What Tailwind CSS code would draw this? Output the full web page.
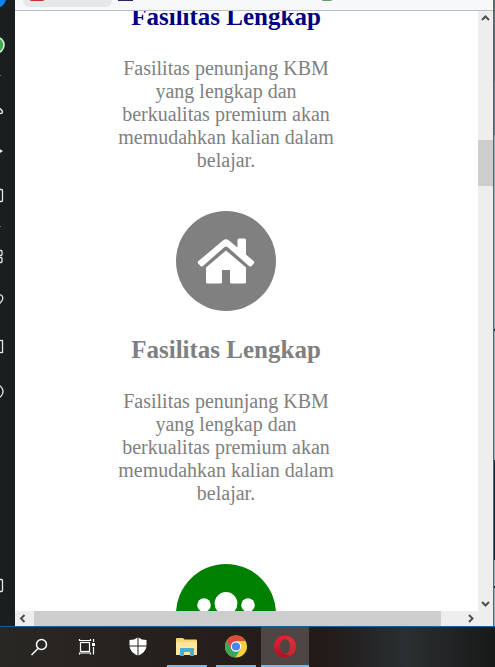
<!DOCTYPE html>
<html lang="id">
<head>
<meta charset="utf-8">
<meta name="viewport" content="width=device-width, initial-scale=1">
<title>Fasilitas Lengkap</title>
<script src="https://cdn.jsdelivr.net/npm/@tailwindcss/browser@4"></script>
</head>
<body class="flex h-screen flex-col overflow-hidden bg-white font-['Liberation_Serif','Times_New_Roman',serif]">
<div class="flex min-h-0 flex-1 border-b border-[#1b5f95]">

  <nav aria-label="Sidebar" class="flex w-[15px] shrink-0 flex-col overflow-hidden bg-[#191e1f]">
    <button aria-label="Messenger" class="h-5 shrink-0"><svg class="block" width="15" height="20"><circle cx="-4" cy="-2" r="10" fill="#0a84f5"/></svg></button>
    <button aria-label="WhatsApp" class="mt-[5px] h-10 shrink-0"><svg class="block" width="15" height="40"><circle cx="-4" cy="20" r="8" fill="#43a850" stroke="#e6f2e6" stroke-width="1.5"/></svg></button>
    <div class="h-[26px] shrink-0"><svg class="block" width="15" height="26"><path d="M0 10.5h1" stroke="#777"/></svg></div>
    <button aria-label="Player" class="h-10 shrink-0"><svg class="block" width="15" height="40" fill="none" stroke="#e8e8e8" stroke-width="1.5"><path d="M-1 17l2 1.500c2 2 2 4-.500 4h-2"/></svg></button>
    <button aria-label="Kirim" class="h-10 shrink-0"><svg class="block" width="15" height="40"><path d="M-1 17.500l4 2.500-4 2.500z" fill="#eee"/></svg></button>
    <button aria-label="Ruang kerja" class="mt-1 h-10 shrink-0"><svg class="block" width="15" height="40"><rect x="-9" y="14.500" width="11.500" height="12" rx="1" fill="none" stroke="#e8e8e8" stroke-width="1.300"/></svg></button>
    <div class="h-[22px] shrink-0"><svg class="block" width="15" height="22"><path d="M0 11.500h1" stroke="#777"/></svg></div>
    <button aria-label="Panggilan cepat" class="h-10 shrink-0"><svg class="block" width="15" height="40" fill="none" stroke="#e8e8e8" stroke-width="1.300"><rect x="-3" y="13.500" width="5" height="5" rx="1"/><rect x="-3" y="20.500" width="5" height="5" rx="1"/></svg></button>
    <button aria-label="Favorit" class="mt-[3px] h-10 shrink-0"><svg class="block" width="15" height="40" fill="none" stroke="#e8e8e8" stroke-width="1.300"><path d="M-1 15c4-1 5 4 2 7l-3 3"/></svg></button>
    <button aria-label="Berita" class="mt-[6px] h-10 shrink-0"><svg class="block" width="15" height="40"><rect x="-9" y="14.500" width="11.500" height="12" fill="none" stroke="#e8e8e8" stroke-width="1.300"/></svg></button>
    <button aria-label="Riwayat" class="mt-[5px] h-10 shrink-0"><svg class="block" width="15" height="40"><circle cx="-3.500" cy="20.500" r="6.500" fill="none" stroke="#e8e8e8" stroke-width="1.300"/></svg></button>
    <button aria-label="Pengaturan" class="mt-auto mb-[21px] h-10 shrink-0"><svg class="block" width="15" height="40"><rect x="-9" y="14.500" width="11.500" height="12" rx="1" fill="none" stroke="#e8e8e8" stroke-width="1.300"/></svg></button>
  </nav>

  <div class="flex min-w-0 flex-1 flex-col">
    <header class="flex h-[11px] shrink-0 items-start border-b border-[#b9bdc4] bg-[#f6f8fa] pl-2">
      <svg class="h-[7px] w-[89px] rounded-b-md bg-[#e6e7e9]"><rect x="6" y="-6" width="16" height="7" rx="3" fill="#c8312b"/></svg>
      <svg class="ml-[6px] h-[7px] w-4"><path d="M0 0h15v1H0z" fill="#1d2a63"/></svg>
      <svg class="ml-[188px] h-[7px] w-4"><rect x="-1" y="-6" width="12" height="7" rx="3" fill="#66a067"/></svg>
    </header>

    <div class="flex min-h-0 flex-1">
      <div class="flex min-w-0 flex-1 flex-col">
        <main class="min-h-0 flex-1 overflow-hidden bg-white pl-[101px] text-center text-[20px] leading-[23px] text-[#808080]">
          <section class="-mt-2 w-[220px]">
            <h2 class="text-[25px] leading-7 font-bold whitespace-nowrap text-[#000080]">Fasilitas Lengkap</h2>
            <p class="mt-[26px]">Fasilitas penunjang KBM yang lengkap dan berkualitas premium akan memudahkan kalian dalam belajar.</p>
          </section>
          <section class="mt-[39px] w-[220px]">
            <svg class="mx-auto block" width="100" height="100" viewBox="0 0 100 100" role="img" aria-label="Rumah">
              <circle cx="50" cy="50" r="50" fill="#808080"/>
              <path fill="#fff" d="M47 29.500q3-2.500 6 0l8.500 7V29q0-1.500 1.500-1.500h5.500q1.500 0 1.500 1.500v14.500l7.500 6.500q1.500 1 .300 2.500l-2 2.300q-1.300 1.500-2.800.200L51.500 36q-1.500-1.200-3 0L27 55q-1.500 1.300-2.800-.200l-2-2.300q-1.200-1.500.300-2.500z"/>
              <path fill="#fff" d="M50 39.500l20 17V71q0 1.500-1.500 1.500H55.500q-1.500 0-1.500-1.500V59h-8v12q0 1.500-1.500 1.500h-13Q30 72.500 30 71V56.500z"/>
            </svg>
            <h2 class="mt-[25px] text-[25px] leading-7 font-bold whitespace-nowrap">Fasilitas Lengkap</h2>
            <p class="mt-[26px]">Fasilitas penunjang KBM yang lengkap dan berkualitas premium akan memudahkan kalian dalam belajar.</p>
          </section>
          <section class="mt-[59px] w-[220px]">
            <svg class="mx-auto block" width="100" height="100" viewBox="0 0 100 100" role="img" aria-label="Pengguna">
              <circle cx="50" cy="50" r="50" fill="#008000"/>
              <g fill="#fff"><circle cx="28" cy="41" r="6.800"/><circle cx="50" cy="39.500" r="11.400"/><circle cx="72" cy="41" r="6.800"/></g>
            </svg>
          </section>
        </main>
        <div class="flex h-[15px] shrink-0 bg-[#eeeeee]">
          <button aria-label="Gulir kiri" class="w-[19px]"><svg class="block" width="19" height="15" fill="none" stroke="#505050" stroke-width="2"><path d="M9.500 4L6 7.500 9.500 11"/></svg></button>
          <div class="flex-1 bg-[#cdcdcd]"></div>
          <button aria-label="Gulir kanan" class="w-[37px]"><svg class="block" width="37" height="15" fill="none" stroke="#505050" stroke-width="2"><path d="M28 4l3.500 3.500L28 11"/></svg></button>
        </div>
      </div>
      <div class="flex w-[15px] shrink-0 flex-col bg-[#eeeeee]">
        <button aria-label="Gulir atas" class="h-[15px]"><svg class="block" width="15" height="15" fill="none" stroke="#505050" stroke-width="2"><path d="M4 9l3.500-3.500L11 9"/></svg></button>
        <div class="mt-[114px] h-[46px] bg-[#cdcdcd]"></div>
        <button aria-label="Gulir bawah" class="mt-auto mb-[15px] h-[15px]"><svg class="block" width="15" height="15" fill="none" stroke="#505050" stroke-width="2"><path d="M4 6l3.500 3.500L11 6"/></svg></button>
      </div>
    </div>
  </div>
  <div class="w-[2px] shrink-0 border-l border-[#2472ab] bg-[#8fb3cc]">
    <div class="h-[82px] bg-[#557076]"></div>
    <div class="h-[53px] bg-[#62789a]"></div>
    <div class="mt-[194px] h-[2px] bg-[#10202c]"></div>
    <div class="mt-[129px] h-[100px] bg-[#09263e]"></div>
    <div class="mt-[26px] h-[2px] bg-[#10202c]"></div>
  </div>
</div>

<footer class="flex h-10 shrink-0 bg-linear-to-r from-[#292724] via-[#241b18] via-60% to-[#171818]">
  <div class="flex flex-1 bg-linear-to-r from-transparent from-65% via-[#2a2f31] via-82% to-transparent pl-[15px]">
    <button aria-label="Cari" class="w-12"><svg class="block" width="48" height="40" fill="none" stroke="#fff" stroke-width="1.500"><circle cx="26.500" cy="17.500" r="5"/><path d="M23 21.500l-6.500 6.500"/></svg></button>
    <button aria-label="Tampilan tugas" class="w-12"><svg class="block" width="48" height="40" fill="none" stroke="#fff" stroke-width="1.200"><rect x="17.500" y="15.500" width="9" height="9"/><path d="M16.500 12v1.500h11V12M16.500 27.500v-1.500h11v1.500M30.500 12v3M30.500 20v7.500"/><path d="M29 16h3v3h-3z" fill="#fff" stroke="none"/></svg></button>
    <button aria-label="Keamanan" class="ml-[3px] w-12"><svg class="block" width="48" height="40" fill="#fff"><path d="M23.500 10.500v8h-8V13q5 0 8-2.500M24.500 10.500q3 2.500 8 2.500v5.500h-8zM15.500 19.500h8V28.500q-7-3-8-9M24.500 19.500h8q-1 6-8 9z"/></svg></button>
    <button aria-label="File Explorer" class="ml-px flex w-12 flex-col items-center"><svg class="block" width="48" height="38"><path d="M13 12q0-1 1-1h6l1.500 1.500H33q1 0 1 1V28H13z" fill="#f8d775"/><path d="M13 15h21v13H13z" fill="#ffe69a"/><path d="M17 22q0-1 1-1h12q1 0 1 1v7h-4v-4h-6v4h-4z" fill="#46acd8"/></svg><span class="h-[2px] w-10 bg-[#76b9ed]"></span></button>
    <button aria-label="Google Chrome" class="ml-px flex w-12 flex-col items-center"><svg class="block" width="48" height="38"><circle cx="24" cy="19.500" r="11" fill="#f9cf42"/><path d="M24 14h9.500A11 11 0 0 0 14.500 14L19 22z" fill="#dc4b3e"/><path d="M14.500 14A11 11 0 0 0 23.500 30.500L28.800 22 24 19.500 19.200 22z" fill="#3ba55b"/><circle cx="24" cy="19.500" r="5.200" fill="#fff"/><circle cx="24" cy="19.500" r="4.100" fill="#4787ed"/></svg><span class="h-[2px] w-10 bg-[#76b9ed]"></span></button>
    <button aria-label="Opera" class="ml-px flex w-12 flex-col items-center bg-[#4d4643]"><svg class="block" width="48" height="38"><defs><linearGradient id="opera" x2="0" y2="1"><stop stop-color="#ee2035"/><stop offset="1" stop-color="#b50e20"/></linearGradient></defs><path fill="url(#opera)" fill-rule="evenodd" d="M24 8.500a11 11 0 1 0 0 22a11 11 0 0 0 0-22m0 3.500c2.800 0 5 3.300 5 7.500s-2.200 7.500-5 7.500s-5-3.300-5-7.500s2.200-7.500 5-7.500"/><path d="M24 12C30 7.500 35 13 35 19.500S30 31.500 24 27c2.800 0 5-3.300 5-7.500S26.800 12 24 12" fill="#d63a40" opacity=".5"/></svg><span class="h-[2px] w-full bg-[#76b9ed]"></span></button>
  </div>
</footer>
</body>
</html>
